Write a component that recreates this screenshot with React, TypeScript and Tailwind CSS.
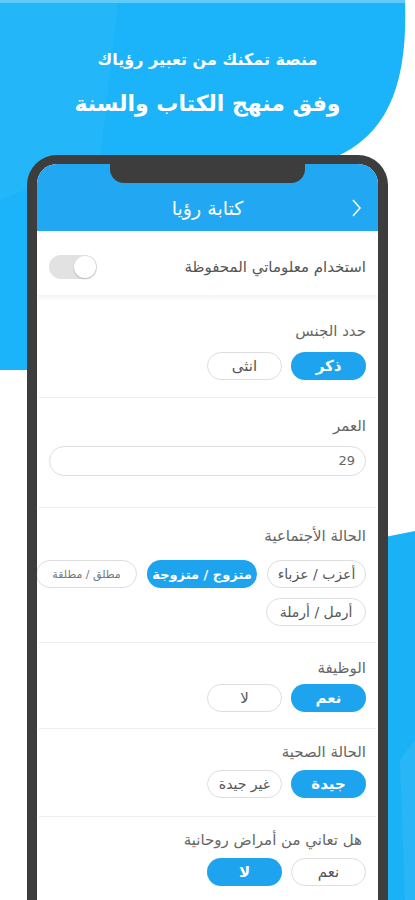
import React from "react";

const Chip = ({
  label,
  active = false,
  w = "w-[75px]",
  size = "text-[15px]",
}: {
  label: string;
  active?: boolean;
  w?: string;
  size?: string;
}) => (
  <div
    className={`${w} h-[28px] shrink-0 rounded-full flex items-center justify-center leading-none whitespace-nowrap ${size} ${
      active
        ? "bg-[#1ea3ef] text-white font-bold"
        : "bg-white border border-[#dedede] text-[#555]"
    }`}
  >
    {label}
  </div>
);

const Sep = () => <div className="h-px bg-[#eeeeee] mx-[2px]" />;

export default function App() {
  return (
    <div
      dir="rtl"
      className="relative w-[415px] h-[900px] overflow-hidden bg-white font-['DejaVu_Sans',sans-serif]"
    >
      <svg
        className="absolute inset-0"
        width="415"
        height="900"
        viewBox="0 0 415 900"
      >
        <path
          d="M0 0 H405 C408 80 390 135 333 158 L300 185 L40 370 L0 370 Z"
          fill="#1bb4fa"
        />
        <path d="M0 0 H118 L100 160 L0 200 Z" fill="#2cbafa" opacity="0.5" />
        <rect x="0" y="0" width="405" height="3" fill="#5fcbfb" />
        <path d="M385 537 L415 531 L415 900 L385 900 Z" fill="#1bb1f7" />
        <path d="M400 760 L415 740 L415 900 L405 900 Z" fill="#37bcf8" opacity="0.5" />
      </svg>

      <div className="relative flex flex-col items-center">
        <p className="mt-[48px] text-[16px] leading-[24px] font-bold text-white">
          منصة تمكنك من تعبير رؤياك
        </p>
        <p className="mt-[15px] text-[22px] leading-[34px] font-bold text-white">
          وفق منهج الكتاب والسنة
        </p>

        <div className="relative mt-[34px] w-[361px] h-[760px] bg-[#3d3d3d] rounded-t-[30px] pt-[9px] px-[10px]">
          <div className="absolute top-0 left-[83px] w-[195px] h-[28px] bg-[#3d3d3d] rounded-b-[14px] z-10" />
          <div className="h-full bg-white rounded-t-[20px] overflow-hidden">
            {/* header */}
            <div className="relative h-[67px] bg-[#22a8f2] flex items-end justify-center pb-[10px]">
              <span className="text-white text-[19px] leading-[26px]">
                كتابة رؤيا
              </span>
              <svg
                className="absolute right-[16px] top-[35px]"
                width="12"
                height="18"
                viewBox="0 0 12 18"
              >
                <polyline
                  points="3,1 10,9 3,17"
                  fill="none"
                  stroke="white"
                  strokeWidth="1.5"
                />
              </svg>
            </div>

            {/* toggle */}
            <div className="relative z-[1] h-[64px] pt-[8px] px-3 flex items-center justify-between bg-white shadow-[0_3px_4px_rgba(0,0,0,0.05)]">
              <span className="text-[15px] text-[#555]">
                استخدام معلوماتي المحفوظة
              </span>
              <div className="w-[48px] h-[24px] rounded-full bg-[#e2e2e2] flex items-center justify-start px-[1px]">
                <div className="w-[22px] h-[22px] rounded-full bg-white shadow-[0_1px_2px_rgba(0,0,0,0.2)]" />
              </div>
            </div>

            {/* gender */}
            <div className="px-3 pt-[26px] pb-[17px]">
              <p className="text-[15px] leading-[20px] text-[#666]">حدد الجنس</p>
              <div className="mt-[11px] flex gap-[9px]">
                <Chip label="ذكر" active />
                <Chip label="انثى" />
              </div>
            </div>
            <Sep />

            {/* age */}
            <div className="px-3 pt-[18px] pb-[31px]">
              <p className="text-[15px] leading-[20px] text-[#666]">العمر</p>
              <div className="mt-[10px] h-[30px] rounded-full border border-[#dedede] flex items-center px-[10px] text-[13px] text-[#666]">
                29
              </div>
            </div>
            <Sep />

            {/* marital */}
            <div className="px-3 pt-[18px] pb-[16px]">
              <p className="text-[15px] leading-[20px] text-[#666]">
                الحالة الأجتماعية
              </p>
              <div className="mt-[14px] flex gap-[10px]">
                <Chip label="أعزب / عزباء" w="w-[99px]" size="text-[14px]" />
                <Chip
                  label="متزوج / متزوجة"
                  w="w-[110px]"
                  size="text-[13px] tracking-[-0.3px]"
                  active
                />
                <div className="-ml-[10px]">
                  <Chip
                    label="مطلق / مطلقة"
                    w="w-[101px]"
                    size="text-[11px] !text-[#777]"
                  />
                </div>
              </div>
              <div className="mt-[10px] flex">
                <Chip label="أرمل / أرملة" w="w-[100px]" size="text-[14px]" />
              </div>
            </div>
            <Sep />

            {/* job */}
            <div className="px-3 pt-[15px] pb-[16px]">
              <p className="text-[15px] leading-[20px] text-[#666]">الوظيفة</p>
              <div className="mt-[6px] flex gap-[9px]">
                <Chip label="نعم" active />
                <Chip label="لا" />
              </div>
            </div>
            <Sep />

            {/* health */}
            <div className="px-3 pt-[13px] pb-[18px]">
              <p className="text-[15px] leading-[20px] text-[#666]">
                الحالة الصحية
              </p>
              <div className="mt-[8px] flex gap-[9px]">
                <Chip label="جيدة" active />
                <Chip label="غير جيدة" size="text-[14px]" />
              </div>
            </div>
            <Sep />

            {/* spiritual */}
            <div className="px-3 pt-[13px] pb-[18px]">
              <p className="text-[15px] leading-[20px] text-[#666] pr-[4px]">
                هل تعاني من أمراض روحانية
              </p>
              <div className="mt-[8px] flex gap-[9px]">
                <Chip label="نعم" />
                <Chip label="لا" active />
              </div>
            </div>
          </div>
        </div>
      </div>
    </div>
  );
}
